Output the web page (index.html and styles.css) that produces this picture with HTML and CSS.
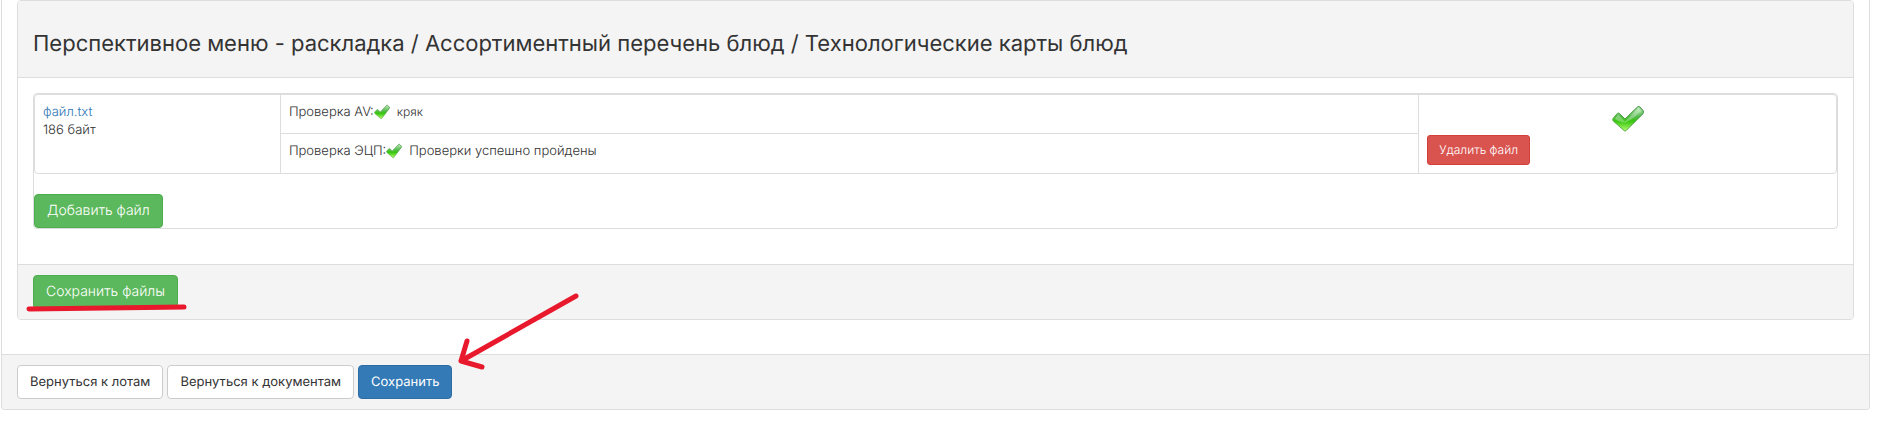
FILE: index.html
```
<!DOCTYPE html>
<html lang="ru">
<head>
    <meta charset="UTF-8">
    <meta name="viewport" content="width=device-width, initial-scale=1.0">
    <title>Документы</title>
    <link rel="stylesheet" href="styles.css">
</head>
<body>
    <svg class="defs" aria-hidden="true">
        <defs>
            <linearGradient id="check-fill" x1="0" y1="0" x2="0" y2="1">
                <stop offset="0" stop-color="#c4eec0"/>
                <stop offset="0.4" stop-color="#58bb50"/>
                <stop offset="0.6" stop-color="#36c60c"/>
                <stop offset="1" stop-color="#b4fb72"/>
            </linearGradient>
            <linearGradient id="check-line" x1="0" y1="1" x2="1" y2="0">
                <stop offset="0" stop-color="#6fbf5a"/>
                <stop offset="1" stop-color="#1d7a1f"/>
            </linearGradient>
            <symbol id="check" viewBox="0 0 32 32">
                <path d="M1 15.5 L5.5 10.3 Q6.5 9.6 7.5 10.5 L13 16 L25.5 4 Q26.7 3 27.8 4 L31 7.5 Q31.8 9.5 30.8 10.8 L14 27.7 Q13 28.5 12 27.5 L1.2 18 Q0.2 16.7 1 15.5 Z" fill="url(#check-fill)" stroke="url(#check-line)"/>
                <path d="M2.8 15.8 L6.3 12 L13 18.4 L26.6 5.4 L29 8 Q23 15 13.5 19.5 Q8 20 2.8 15.8 Z" fill="#ffffff" opacity="0.3"/>
            </symbol>
            <symbol id="check-small" viewBox="0 0 16 16">
                <path d="M0.6 8.2 L2.8 5.7 Q3.3 5.2 3.8 5.7 L6.3 7.9 L12.6 1.4 Q13.2 0.9 13.7 1.4 L15.4 3.1 Q15.8 3.7 15.4 4.3 L7.7 14.6 Q7.2 15.1 6.6 14.6 L0.6 9.2 Q0.2 8.7 0.6 8.2 Z" fill="url(#check-fill)" stroke="url(#check-line)" stroke-width="0.6"/>
            </symbol>
        </defs>
    </svg>

    <div class="panel page-panel">
        <div class="page-body">
            <div class="panel">
                <div class="panel-heading">
                    <h3>Перспективное меню - раскладка / Ассортиментный перечень блюд / Технологические карты блюд</h3>
                </div>
                <div class="panel-body">
                    <div class="files">
                        <table class="file-table">
                            <colgroup>
                                <col class="col-name">
                                <col class="col-checks">
                                <col>
                            </colgroup>
                            <tr>
                                <td rowspan="2"><a href="#">файл.txt</a><br>186 байт</td>
                                <td class="check-row first">
                                    <div class="check-line">Проверка AV:<svg class="icon"><use href="#check-small"/></svg><small>кряк</small></div>
                                </td>
                                <td rowspan="2">
                                    <svg class="icon-big"><use href="#check"/></svg>
                                    <button class="btn btn-danger" type="button">Удалить файл</button>
                                </td>
                            </tr>
                            <tr>
                                <td class="check-row">
                                    <div class="check-line">Проверка ЭЦП:<svg class="icon"><use href="#check-small"/></svg><span>Проверки успешно пройдены</span></div>
                                </td>
                            </tr>
                        </table>
                        <button class="btn btn-success" type="button">Добавить файл</button>
                    </div>
                </div>
                <div class="panel-footer">
                    <div class="marked">
                        <button class="btn btn-success" type="button">Сохранить файлы</button>
                        <svg class="underline" viewBox="0 0 162 8"><path d="M3 5 L158 3"/></svg>
                    </div>
                </div>
            </div>
        </div>
        <div class="panel-footer">
            <button class="btn btn-default" type="button">Вернуться к лотам</button>
            <button class="btn btn-default" type="button">Вернуться к документам</button>
            <div class="marked">
                <button class="btn btn-primary" type="button">Сохранить</button>
                <svg class="arrow" viewBox="0 0 122 78"><path d="M118 4 L3 69 M9 49 L3 69 L24 75"/></svg>
            </div>
        </div>
    </div>
</body>
</html>
```
FILE: styles.css
```
*{
    box-sizing: border-box;
}

body{
    margin: 0;
    padding: 0 30px 10px 1px;
    background-color: #fff;
    color: #333;
    font-family: Inter, "Liberation Sans", sans-serif;
    font-size: 13px;
    font-weight: 300;
    line-height: 18px;
    text-rendering: geometricPrecision;
}

a{
    color: #337ab7;
    text-decoration: none;
}

.defs{
    position: absolute;
    width: 0;
    height: 0;
}

.panel{
    border: 1px solid #ddd;
    border-radius: 4px;
}

.page-panel{
    border-top: none;
    border-top-left-radius: 0;
    border-top-right-radius: 0;
}

.page-body{
    padding: 0 15px 34px;
}

.panel-heading{
    padding: 30px 15px 20px;
    background-color: #f4f4f4;
    border-bottom: 1px solid #ddd;
    border-radius: 3px 3px 0 0;
}

.panel-heading h3{
    margin: 0;
    font-size: 22px;
    font-weight: 400;
    line-height: 26px;
}

.panel-body{
    padding: 15px 15px 35px;
}

.panel-footer{
    display: flex;
    gap: 4px;
    padding: 10px 15px;
    background-color: #f4f4f4;
    border-top: 1px solid #ddd;
    border-radius: 0 0 3px 3px;
}

.files{
    border: 1px solid #ddd;
    border-radius: 4px;
}

.file-table{
    width: 100%;
    margin-bottom: 20px;
    table-layout: fixed;
    border: 1px solid #ddd;
    border-radius: 4px;
    border-collapse: separate;
    border-spacing: 0;
}

.col-name{
    width: 13.6%;
}

.col-checks{
    width: 63.2%;
}

.file-table td{
    padding: 8px;
    vertical-align: top;
}

.file-table td + td, .check-row{
    border-left: 1px solid #ddd;
}

.file-table .first{
    border-bottom: 1px solid #ddd;
}

.file-table .check-row{
    height: 39px;
}

.check-line{
    display: flex;
    align-items: center;
}

.check-line small{
    font-size: 12px;
}

.icon{
    width: 16px;
    height: 16px;
    margin-right: 7px;
}

.icon-big{
    display: block;
    width: 32px;
    height: 32px;
    margin: 0 auto;
}

.btn{
    display: block;
    padding: 6px 12px;
    border: 1px solid transparent;
    border-radius: 4px;
    font-family: inherit;
    font-size: 13px;
    line-height: 20px;
    text-rendering: inherit;
    cursor: pointer;
}

.btn-default{
    background-color: #fff;
    border-color: #ccc;
    color: #333;
}

.btn-primary{
    background-color: #337ab7;
    border-color: #2e6da4;
    color: #fff;
}

.btn-success{
    background-color: #5cb85c;
    border-color: #4cae4c;
    color: #fff;
    font-size: 14px;
    font-weight: 300;
}

.btn-danger{
    padding: 5px 11px;
    background-color: #d9534f;
    border-color: #d43f3a;
    border-radius: 3px;
    color: #fff;
    font-size: 12px;
    font-weight: 300;
    line-height: 18px;
}

/* red marks drawn over the buttons */
.marked{
    position: relative;
}

.underline, .arrow{
    position: absolute;
    fill: none;
    stroke: #e8192c;
    stroke-width: 5;
    stroke-linecap: round;
    stroke-linejoin: round;
    pointer-events: none;
}

.underline{
    left: -7px;
    bottom: -3px;
    width: 162px;
    height: 8px;
}

.arrow{
    left: 100px;
    bottom: 29px;
    width: 122px;
    height: 78px;
}
```
